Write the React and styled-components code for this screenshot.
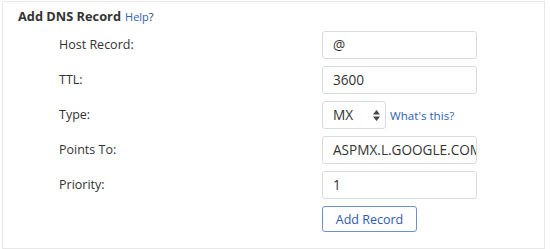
import React from 'react';
import styled, { createGlobalStyle } from 'styled-components';

const GlobalStyle = createGlobalStyle`
  body {
    margin: 0;
    background: #ffffff;
    font-family: 'Open Sans', 'Liberation Sans', sans-serif;
    color: #333333;
  }
`;

const Panel = styled.div`
  box-sizing: border-box;
  width: 543px;
  height: 248px;
  margin: 1px 0 0 2px;
  border: 1px solid #e8e8e8;
  padding: 5px 0 0 15px;
`;

const Heading = styled.div`
  display: flex;
  align-items: baseline;
  gap: 4px;
  height: 24px;
`;

const Title = styled.span`
  font-size: 12.8px;
  font-weight: 700;
  color: #333333;
`;

const HelpLink = styled.a`
  font-size: 11px;
  color: #2f63b5;
  text-decoration: none;
  span {
    color: #333333;
  }
`;

const Form = styled.div`
  display: grid;
  grid-template-columns: 263px 1fr;
  row-gap: 7px;
  padding-left: 41px;
  align-items: center;
`;

const Label = styled.div`
  font-size: 12.5px;
  color: #333333;
  height: 28px;
  line-height: 28px;
`;

const Field = styled.div`
  display: flex;
  align-items: center;
  gap: 4px;
`;

const TextInput = styled.div`
  box-sizing: border-box;
  width: ${(p) => p.width || 155}px;
  height: ${(p) => p.height || 28}px;
  border: 1px solid #d6dbe0;
  border-radius: 3px;
  padding-left: 10px;
  font-size: 13.6px;
  line-height: 26px;
  color: #333333;
  white-space: nowrap;
  overflow: hidden;
  background: #fff;
`;

const Select = styled(TextInput)`
  display: flex;
  align-items: center;
  justify-content: space-between;
  padding-right: 5px;
`;

const Arrows = styled.svg`
  flex: none;
  width: 7px;
  height: 11px;
`;

const InfoLink = styled.a`
  font-size: 11.6px;
  color: #2f63b5;
  text-decoration: none;
`;

const Button = styled.button`
  box-sizing: border-box;
  width: 95px;
  height: 26px;
  border: 1px solid #6f8fc7;
  border-radius: 3px;
  background: #ffffff;
  color: #2c5ba6;
  font-family: 'Open Sans', 'Liberation Sans', sans-serif;
  font-size: 12.5px;
  padding: 0;
`;

export default function App() {
  return (
    <>
      <GlobalStyle />
      <Panel>
        <Heading>
          <Title>Add DNS Record</Title>
          <HelpLink href="#">
            Help<span>?</span>
          </HelpLink>
        </Heading>
        <Form>
          <Label>Host Record:</Label>
          <Field>
            <TextInput>@</TextInput>
          </Field>
          <Label>TTL:</Label>
          <Field>
            <TextInput>3600</TextInput>
          </Field>
          <Label>Type:</Label>
          <Field>
            <Select width={64}>
              MX
              <Arrows viewBox="0 0 7 11">
                <path d="M3.5 0 L7 4.5 L0 4.5 Z M3.5 11 L7 6.5 L0 6.5 Z" fill="#444" />
              </Arrows>
            </Select>
            <InfoLink href="#">What's this?</InfoLink>
          </Field>
          <Label>Points To:</Label>
          <Field>
            <TextInput>ASPMX.L.GOOGLE.COM</TextInput>
          </Field>
          <Label>Priority:</Label>
          <Field>
            <TextInput>1</TextInput>
          </Field>
          <div />
          <Field>
            <Button>Add Record</Button>
          </Field>
        </Form>
      </Panel>
    </>
  );
}
